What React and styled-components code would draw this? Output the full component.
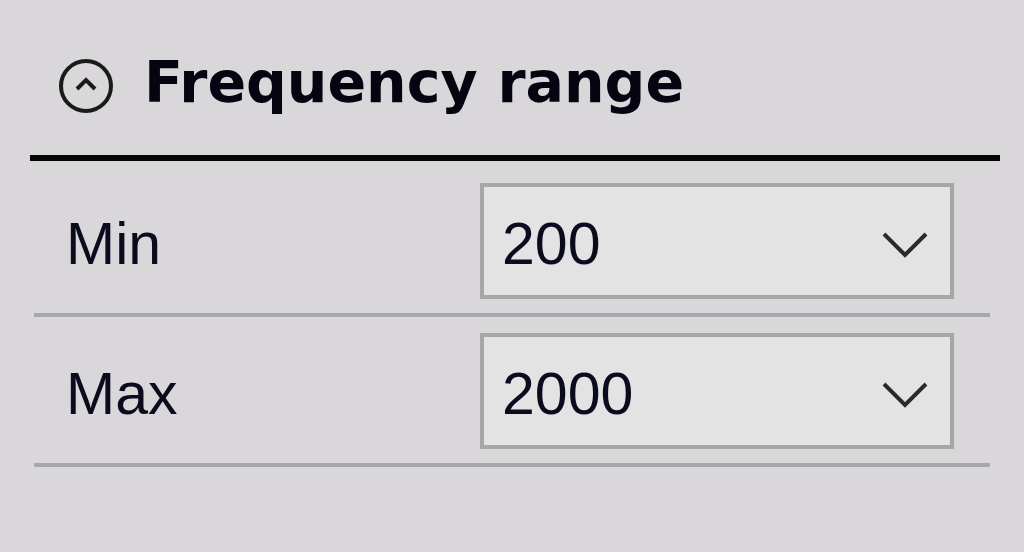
import styled, { createGlobalStyle } from 'styled-components'

const GlobalStyle = createGlobalStyle`
html, body {
    margin: 0;
    padding: 0;
    background: #D9D7DA;
}
`

const Panel = styled.section`
width: 1024px;
height: 552px;
box-sizing: border-box;
padding: 0 24px 0 30px;
background: #D9D7DA;
color: #0B0B1E;
font-family: 'Liberation Sans', Arial, sans-serif;
`

const Header = styled.div`
display: flex;
flex-direction: row;
align-items: center;
gap: 30px;
height: 161px;
padding: 16px 0 0 28px;
box-sizing: border-box;
border-bottom: 6px solid #050505;
`

const Title = styled.h2`
margin: 0;
font-family: 'DejaVu Sans', Verdana, sans-serif;
font-weight: 700;
font-size: 57px;
line-height: 1;
color: #050512;
position: relative;
top: -3px;
`

const Rows = styled.div`
display: flex;
flex-direction: column;
padding: 0 10px 0 4px;
margin-top: 6px;
`

const Row = styled.div`
display: grid;
grid-template-columns: 446px 474px;
align-items: center;
padding: 16px 0 14px;
border-bottom: 4px solid #A8A7A9;
`

const Label = styled.span`
padding-left: 32px;
font-size: 59px;
position: relative;
top: 3px;
`

const Select = styled.div`
display: flex;
flex-direction: row;
align-items: center;
justify-content: space-between;
height: 116px;
box-sizing: border-box;
padding: 0 20px 0 18px;
background: #E3E3E3;
border: 4px solid #A6A6A6;
font-size: 59px;
span {
    position: relative;
    top: 3px;
}
svg {
    margin-top: 8px;
}
`

const CollapseIcon = () => (
    <svg width="56" height="56" viewBox="0 0 56 56">
        <circle cx="28" cy="28" r="25" fill="none" stroke="#1A1A1A" strokeWidth="4" />
        <path d="M19 31 L28 22 L37 31" fill="none" stroke="#1A1A1A" strokeWidth="4" />
    </svg>
)

const Chevron = () => (
    <svg width="50" height="30" viewBox="0 0 50 30">
        <path d="M4 4 L25 25 L46 4" fill="none" stroke="#2A2A2A" strokeWidth="4" />
    </svg>
)

const fields = [
    { label: 'Min', value: '200' },
    { label: 'Max', value: '2000' },
]

const App = () => {
    return (
        <Panel>
            <GlobalStyle />
            <Header>
                <CollapseIcon />
                <Title>Frequency range</Title>
            </Header>
            <Rows>
                {fields.map((f) => (
                    <Row key={f.label}>
                        <Label>{f.label}</Label>
                        <Select>
                            <span>{f.value}</span>
                            <Chevron />
                        </Select>
                    </Row>
                ))}
            </Rows>
        </Panel>
    )
}

export default App
